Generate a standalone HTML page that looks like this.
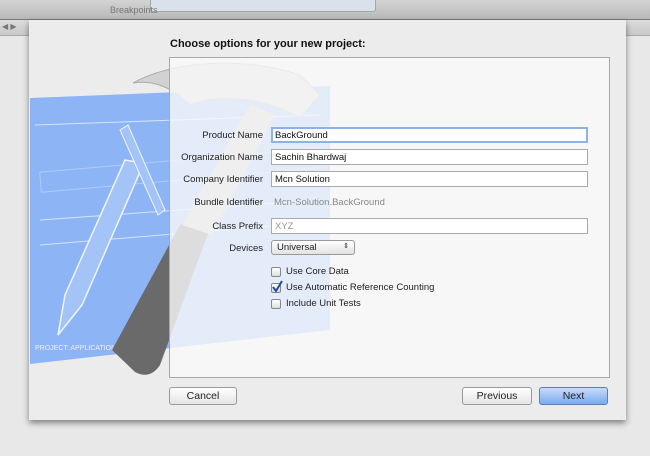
<!DOCTYPE html>
<html><head><style>
*{margin:0;padding:0;box-sizing:border-box}
body{width:650px;height:456px;overflow:hidden;background:#e8e8e8;font-family:"Liberation Sans",sans-serif;font-size:10px;color:#222;position:relative}
.top{position:absolute;left:0;top:0;width:650px;height:20px;background:linear-gradient(#d4d4d4,#b8b8b8);border-bottom:1px solid #777}
.bar2{position:absolute;left:0;top:20px;width:650px;height:16px;background:linear-gradient(#dcdcdc,#c9c9c9);border-bottom:1px solid #aaa}
.sheet{position:absolute;left:29px;top:20px;width:597px;height:400px;background:#ececec;box-shadow:0 3px 6px rgba(0,0,0,.45)}
.panel{position:absolute;left:169px;top:57px;width:441px;height:321px;border:1px solid #a8a8a8;background:rgba(250,250,250,.8)}
.lbl{position:absolute;right:387px;width:120px;text-align:right;font-size:9.5px;color:#222}
.inp{position:absolute;left:271px;width:317px;height:16px;background:#fff;border:1px solid #aaa;font-size:9.5px;padding:2px 3px;color:#111}
.cb{position:absolute;left:271px;width:10px;height:10px;border:1px solid #888;border-radius:2px;background:linear-gradient(#fff,#ddd)}
.cbl{position:absolute;left:286px;font-size:9.5px}
.btn{position:absolute;top:387px;height:18px;border:1px solid #999;border-radius:3px;background:linear-gradient(#fff,#e4e4e4);font-size:10.5px;text-align:center;line-height:16px}
</style></head><body>
<div class="top"><div style="position:absolute;left:150px;top:0;width:226px;height:12px;background:#d9e1ea;border:1px solid #9aa;border-top:none;border-radius:0 0 3px 3px"></div>
<div style="position:absolute;left:110px;top:5px;font-size:9px;color:#777">Breakpoints</div></div>
<div class="bar2"><span style="position:absolute;left:2px;top:2px;color:#777;font-size:8px">◀ ▶</span></div>
<div class="sheet"></div>
<svg style="position:absolute;left:0;top:0" width="650" height="456">
<polygon points="30,98 330,86 330,330 30,364" fill="#8db4f4"/>
<line x1="35" y1="125" x2="320" y2="115" stroke="#d6e6ff" stroke-width="1"/>
<line x1="40" y1="220" x2="320" y2="200" stroke="#d6e6ff" stroke-width="1"/>
<line x1="40" y1="245" x2="320" y2="222" stroke="#d6e6ff" stroke-width="1"/>
<rect x="40" y="160" width="280" height="20" fill="none" stroke="#c6dbff" transform="rotate(-5 180 170)" opacity=".6"/>
<polygon points="58,335 65,295 125,160 137,162 140,172 82,305" fill="#a4c4f7" stroke="#eef5ff" stroke-width="1.5"/>
<polygon points="120,130 128,125 165,210 158,215" fill="#a4c4f7" stroke="#eef5ff"/>
<text x="35" y="350" font-size="7" fill="#e8f1ff" font-family="Liberation Sans">PROJECT: APPLICATION.APP</text>
<path d="M133,83 C170,62 240,55 300,75 L320,95 L300,118 C260,95 215,95 190,105 C170,85 150,80 133,83Z" fill="#d2d2d2" stroke="#aaa"/>
<path d="M112,350 L180,225 Q195,215 210,228 L160,365 Q150,380 135,372 Z" fill="#6a6a6a"/>
<polygon points="182,225 250,105 275,115 212,235" fill="#c4c4c4"/>
</svg>
<div class="panel"></div>
<div style="position:absolute;left:170px;top:38px;font-weight:bold;font-size:11px;color:#111">Choose options for your new project:</div>
<div class="lbl" style="top:130px">Product Name</div>
<div class="inp" style="top:127px;border:2px solid #8cb2e6;padding:1px 2px">BackGround</div>
<div class="lbl" style="top:152px">Organization Name</div>
<div class="inp" style="top:149px">Sachin Bhardwaj</div>
<div class="lbl" style="top:174px">Company Identifier</div>
<div class="inp" style="top:171px">Mcn Solution</div>
<div class="lbl" style="top:197px">Bundle Identifier</div>
<div style="position:absolute;left:274px;top:197px;font-size:9.5px;color:#888">Mcn-Solution.BackGround</div>
<div class="lbl" style="top:221px">Class Prefix</div>
<div class="inp" style="top:218px;color:#999">XYZ</div>
<div class="lbl" style="top:243px">Devices</div>
<div style="position:absolute;left:271px;top:240px;width:84px;height:15px;border:1px solid #999;border-radius:3px;background:linear-gradient(#fff,#e2e2e2);font-size:9.5px;padding:1px 5px">Universal<span style="position:absolute;right:5px;top:1px;font-size:7px">⇕</span></div>
<div class="cb" style="top:267px"></div><div class="cbl" style="top:266px">Use Core Data</div>
<div class="cb" style="top:283px"></div><svg style="position:absolute;left:271px;top:280px" width="12" height="13"><path d="M2,7 L5,11 L11,1" fill="none" stroke="#1d4f9a" stroke-width="2"/></svg><div class="cbl" style="top:282px">Use Automatic Reference Counting</div>
<div class="cb" style="top:299px"></div><div class="cbl" style="top:298px">Include Unit Tests</div>
<div class="btn" style="left:169px;width:68px">Cancel</div>
<div class="btn" style="left:462px;width:70px">Previous</div>
<div class="btn" style="left:539px;width:69px;background:linear-gradient(#c6dcfb,#7aaaf0);border-color:#5a7fb8">Next</div>
</body></html>
